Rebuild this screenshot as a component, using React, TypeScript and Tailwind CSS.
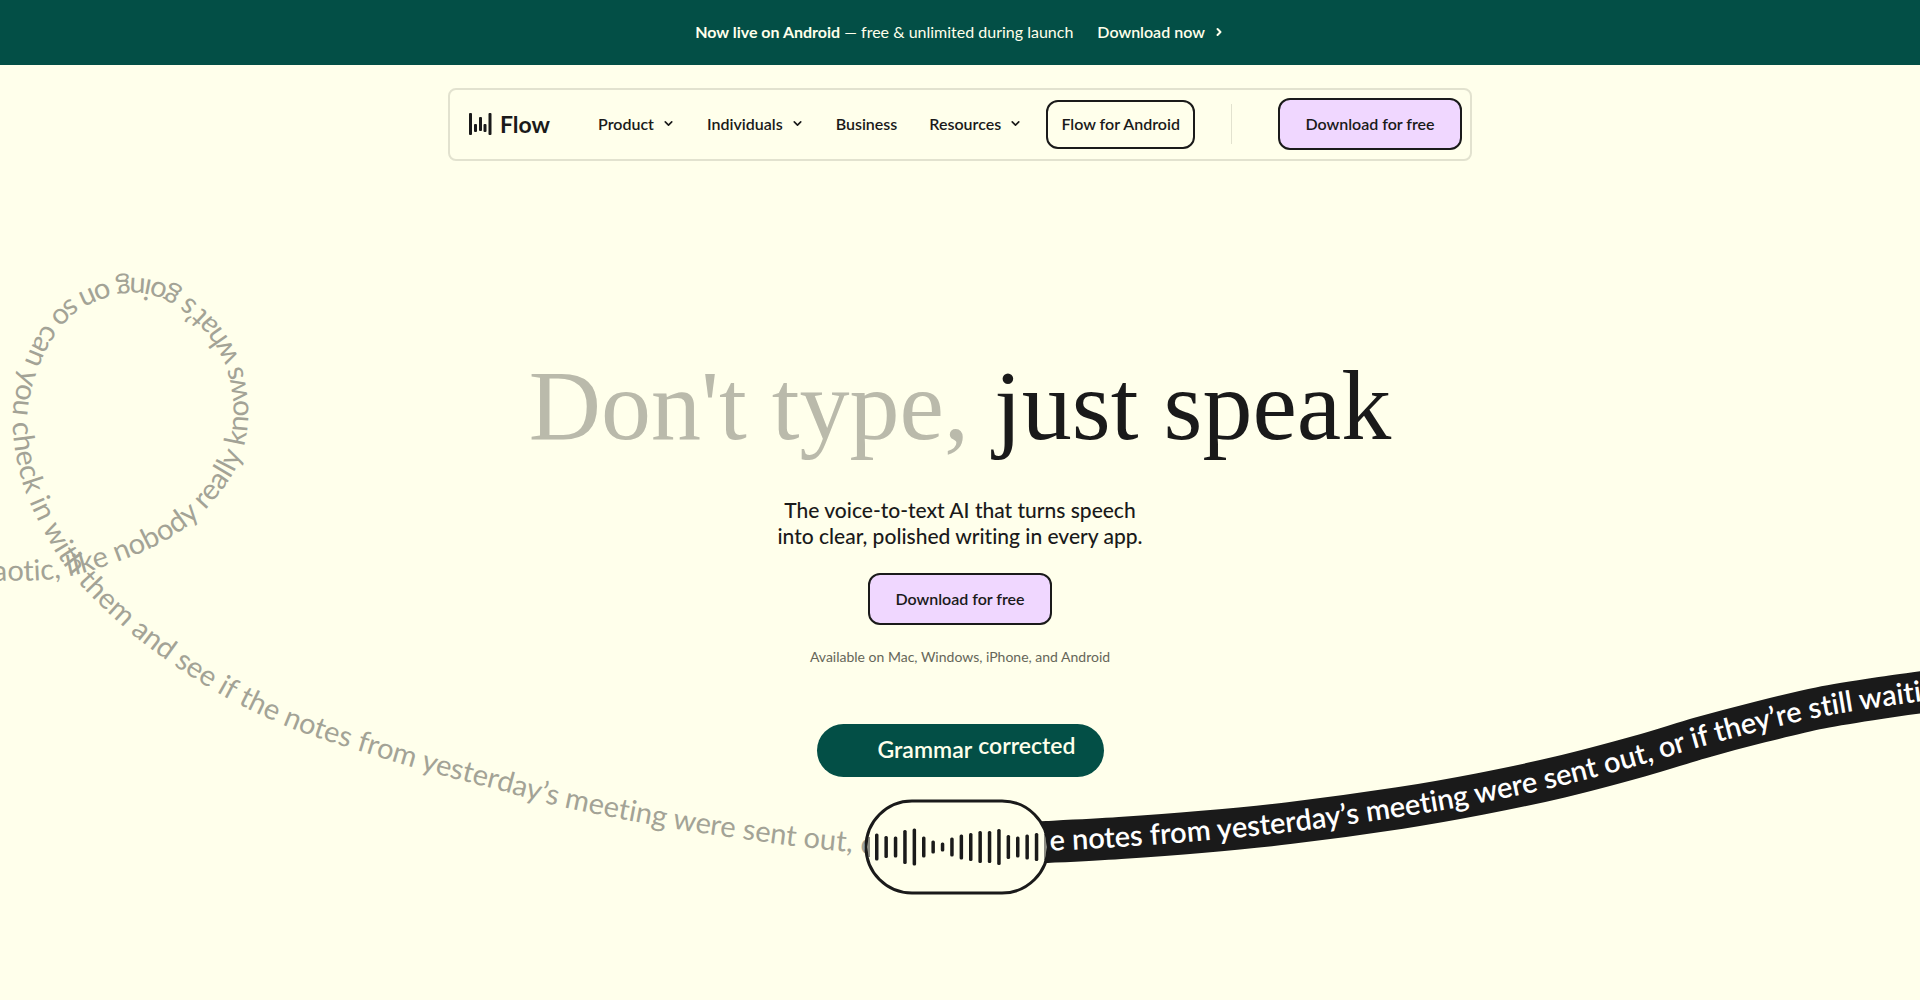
import { ChevronDown, ChevronRight } from "lucide-react";

type Point = [number, number];

/* Smooth curve through a list of points (Catmull-Rom converted to cubic Béziers). */
function smooth(points: Point[]): string {
  let d = `M${points[0][0]} ${points[0][1]}`;
  for (let i = 0; i < points.length - 1; i++) {
    const p0 = points[Math.max(i - 1, 0)];
    const p1 = points[i];
    const p2 = points[i + 1];
    const p3 = points[Math.min(i + 2, points.length - 1)];
    d += ` C${p1[0] + (p2[0] - p0[0]) / 6} ${p1[1] + (p2[1] - p0[1]) / 6} ${p2[0] - (p3[0] - p1[0]) / 6} ${p2[1] - (p3[1] - p1[1]) / 6} ${p2[0]} ${p2[1]}`;
  }
  return d;
}

const spokenPath = smooth([
  [-60, 582], [0, 581], [60, 578], [120, 561], [170, 538], [207, 508], [237, 466], [248, 420],
  [243, 373], [226, 335], [198, 304], [165, 284], [130, 278], [95, 286], [65, 302], [40, 331],
  [22, 370], [13, 410], [15, 450], [25, 490], [42, 528], [64, 565], [92, 597], [132, 634],
  [175, 666], [227, 698], [293, 729], [366, 753], [433, 773], [495, 789], [567, 808],
  [676, 829], [743, 839], [802, 847], [880, 855],
]);

const ribbonPoints: Point[] = [
  [960, 846], [1047, 842], [1120, 838], [1200, 832], [1290, 823], [1400, 808], [1480, 794],
  [1560, 777], [1640, 756], [1700, 738], [1760, 722], [1820, 708], [1880, 698], [1960, 687],
];
const ribbonPath = smooth(ribbonPoints);
const writtenPath = smooth(ribbonPoints.map(([x, y]) => [x, y + 9]));

const waveBars = [27, 22, 21, 34, 37, 21, 13, 9, 19, 25, 28, 32, 32, 36, 24, 21, 25, 28];

function Ribbon() {
  return (
    <svg
      viewBox="0 0 1920 1000"
      className="pointer-events-none absolute left-0 top-0 h-auto w-full [font-variant-ligatures:none]"
      aria-hidden="true"
    >
      <defs>
        <path id="spoken" d={spokenPath} />
        <path id="written" d={writtenPath} />
      </defs>
      <text className="fill-[#a3a396] text-[29px]">
        <textPath href="#spoken" startOffset="53">
          aotic, like nobody really knows what’s going on so can you check in with them and see if the
          notes from yesterday’s meeting were sent out, or
        </textPath>
      </text>
      <path d={ribbonPath} fill="none" stroke="#1a1a1a" strokeWidth="42" />
      <text className="fill-white text-[29px] font-semibold">
        <textPath href="#written" startOffset="63">
          the notes from yesterday’s meeting were sent out, or if they’re still waiting
        </textPath>
      </text>
      <rect x="866" y="801" width="182" height="92" rx="46" fill="#ffffeb" stroke="#1a1a1a" strokeWidth="3" />
      {waveBars.map((h, i) => (
        <rect key={i} x={875 + i * 9.4} y={847 - h / 2} width="3.5" height={h} rx="1.5" fill="#1a1a1a" />
      ))}
      <rect x="868" y="837" width="2" height="20" fill="#1a1a1a" opacity="0.5" />
      <rect x="1044" y="834" width="2" height="26" fill="#1a1a1a" opacity="0.5" />
    </svg>
  );
}

function Logo() {
  return (
    <a href="#" className="flex items-center gap-2">
      <svg width="23" height="23" viewBox="0 0 23 23" aria-hidden="true" fill="#1a1a1a">
        <rect x="0" y="0" width="3" height="22" rx="1" />
        <rect x="5" y="11" width="3" height="8" rx="1" />
        <rect x="10" y="4" width="3" height="14" rx="1" />
        <rect x="14.500" y="11" width="3" height="8" rx="1" />
        <rect x="19.500" y="0" width="3" height="22" rx="1" />
      </svg>
      <span className="text-[23px] font-bold leading-6">Flow</span>
    </a>
  );
}

function NavItem({ label, menu = true }: { label: string; menu?: boolean }) {
  if (!menu) {
    return <a href="#">{label}</a>;
  }
  return (
    <button type="button" className="flex items-center gap-2">
      {label}
      <ChevronDown size={13} strokeWidth={3} />
    </button>
  );
}

function DownloadButton() {
  return (
    <a
      href="#"
      className="flex h-[52px] w-[184px] shrink-0 items-center justify-center rounded-xl border-2 border-[#1a1a1a] bg-[#f0d7ff] pb-px text-base font-semibold"
    >
      Download for free
    </a>
  );
}

export default function App() {
  return (
    <div className="relative min-h-screen overflow-hidden bg-[#ffffeb] font-['Lato',sans-serif] text-[#1a1a1a]">
      <Ribbon />
      <div className="flex h-[65px] items-center justify-center gap-6 bg-[#034f46] pb-0.5 text-base text-[#ffffeb]">
        <p>
          <strong className="font-bold">Now live on Android</strong> — free &amp; unlimited during launch
        </p>
        <a href="#" className="flex items-center gap-2 font-semibold">
          Download now
          <ChevronRight size={12} strokeWidth={4} />
        </a>
      </div>

      <header className="relative mx-auto mt-[23px] flex h-[73px] w-full max-w-[1024px] items-center rounded-lg border-2 border-[#e2e2cf] pb-px pl-[19px] pr-2">
        <Logo />
        <nav className="ml-12 flex items-center gap-8 pb-px text-base font-semibold" aria-label="Main">
          <NavItem label="Product" />
          <NavItem label="Individuals" />
          <NavItem label="Business" menu={false} />
          <NavItem label="Resources" />
        </nav>
        <a
          href="#"
          className="ml-6 flex h-[49px] w-[149px] items-center justify-center rounded-xl border-2 border-[#1a1a1a] pb-px text-base font-semibold"
        >
          Flow for Android
        </a>
        <div className="ml-9 mr-auto h-10 w-px bg-[#e2e2cf]" />
        <DownloadButton />
      </header>

      <main className="relative flex flex-col items-center pt-[185px] text-center">
        <h1 className="font-['Liberation_Serif',serif] text-[100px] leading-[120px]">
          <span className="text-[#babaab]">Don't type,</span> just speak
        </h1>
        <p className="mt-[31px] text-[21px] font-medium leading-[26px] [font-variant-ligatures:none]">
          The voice-to-text AI that turns speech
          <br />
          into clear, polished writing in every app.
        </p>
        <div className="mt-6">
          <DownloadButton />
        </div>
        <p className="mt-[22px] text-sm text-[#666659]">Available on Mac, Windows, iPhone, and Android</p>
        <div className="mt-[57px] flex h-[53px] w-[287px] items-center justify-end gap-1.5 rounded-full bg-[#034f46] pb-0.5 pr-7 text-[23px] font-semibold text-[#ffffeb]">
          <span>Grammar</span>
          <span className="pb-2">corrected</span>
        </div>
      </main>
    </div>
  );
}
